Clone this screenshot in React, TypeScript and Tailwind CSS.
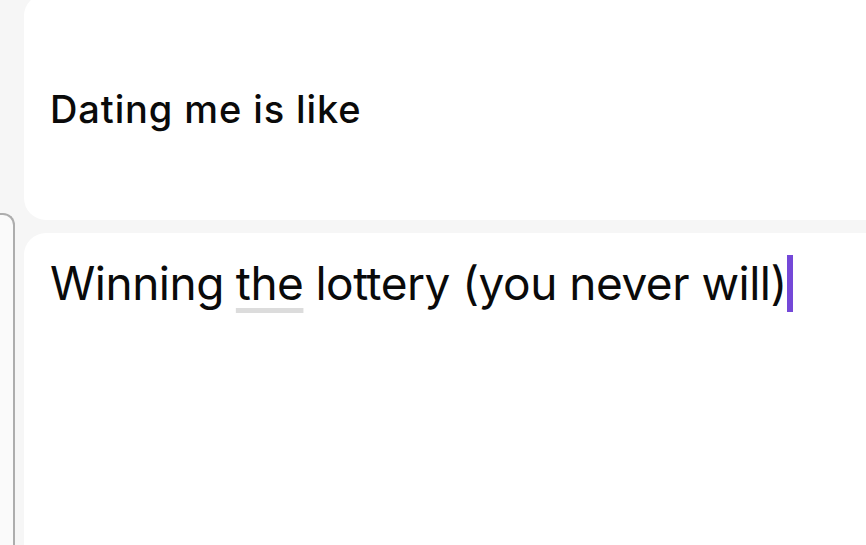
export default function App() {
  return (
    <div
      className="flex h-[545px] w-full overflow-hidden bg-[#f6f6f6]"
      style={{ fontFamily: '"Inter", "Noto Sans", sans-serif' }}
    >
      {/* left edge of the neighbouring panel */}
      <div className="flex w-[24px] shrink-0 flex-col">
        <div className="h-[213px] shrink-0" />
        <div className="w-[15px] flex-1 rounded-tr-[12px] border-t-[2px] border-r-[2px] border-[#adadad] bg-[#fafafa]" />
      </div>

      {/* prompt + answer cards */}
      <div className="flex flex-1 flex-col gap-[13px] -mt-[6px]">
        <div className="flex h-[226px] shrink-0 items-center rounded-l-[22px] bg-white pl-[26px] pt-[4px]">
          <h2 className="text-[38px] font-medium leading-none tracking-[0.9px] text-[#0a0a0a]">
            Dating me is like
          </h2>
        </div>
        <div className="flex-1 rounded-tl-[22px] bg-white pl-[26px] pt-[22px]">
          <p className="flex items-center text-[46px] leading-[57px] tracking-[-0.5px] text-[#0a0a0a]">
            <span>Winning </span>
            <span className="ml-[12px] underline decoration-[#dcdcdc] decoration-[5px] underline-offset-[8px]">the</span>
            <span className="ml-[12px]">lottery (you never will)</span>
            <span className="inline-block h-[57px] w-[6px] bg-[#7448d8]" />
          </p>
        </div>
      </div>
    </div>
  );
}
